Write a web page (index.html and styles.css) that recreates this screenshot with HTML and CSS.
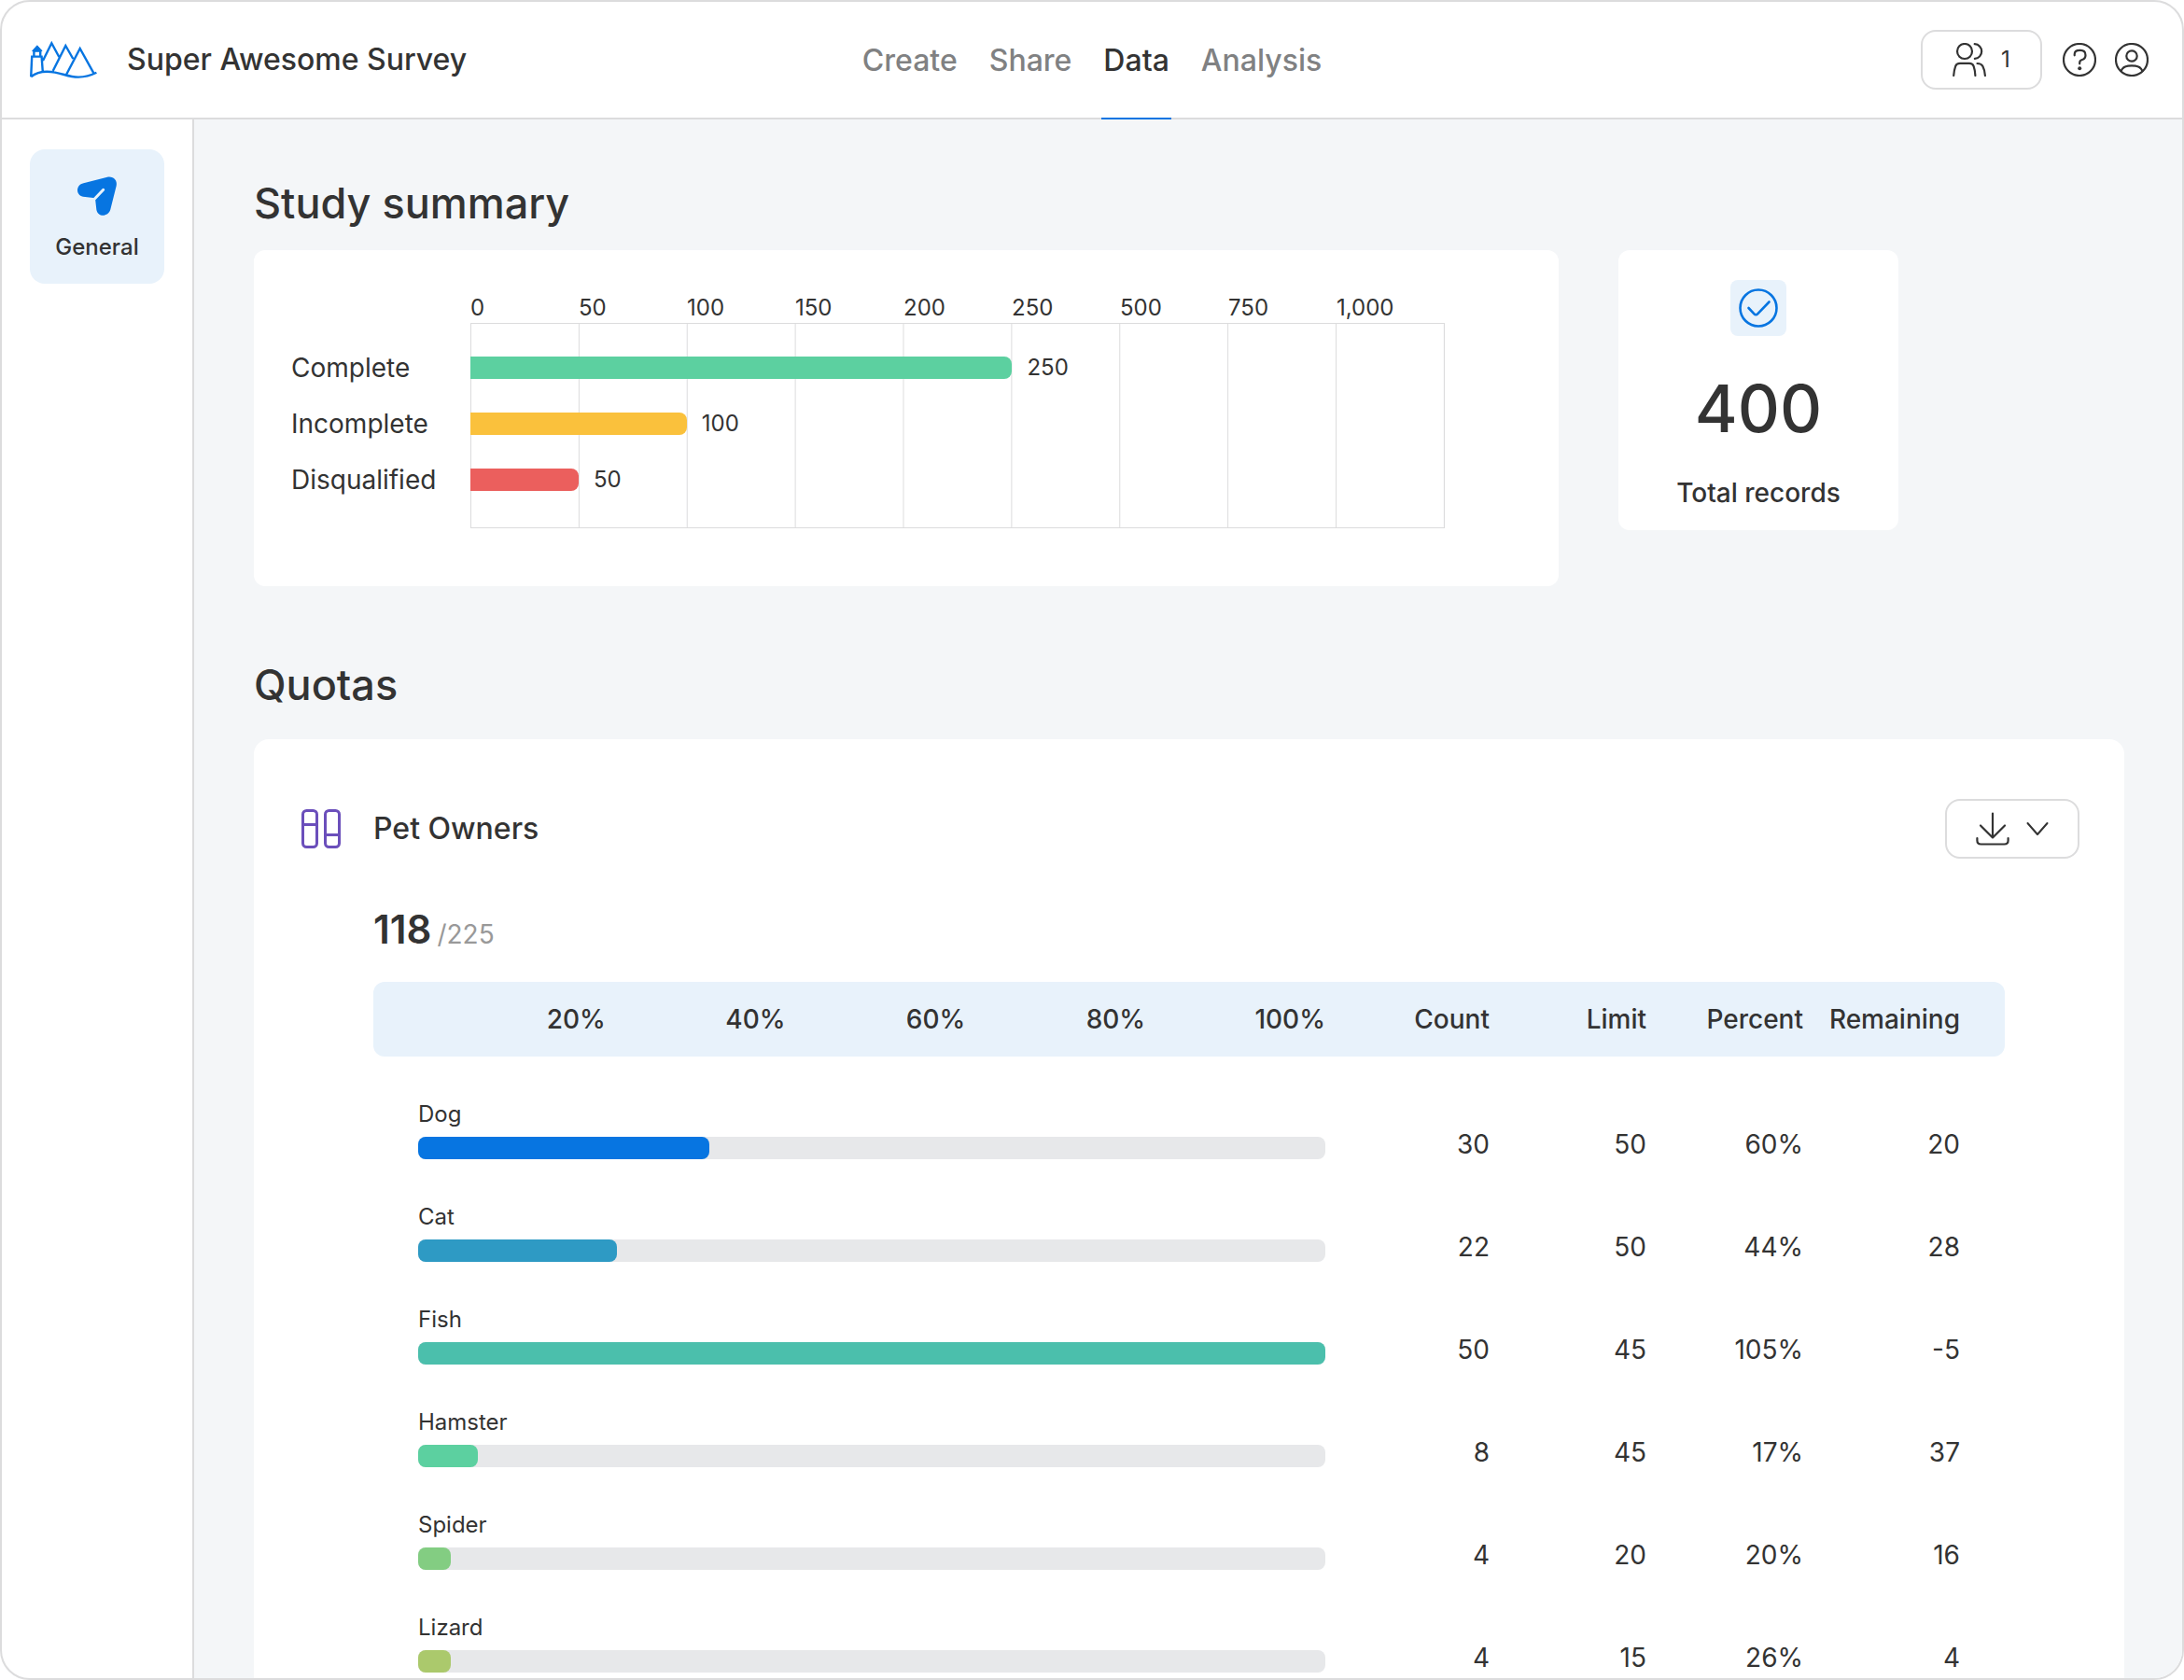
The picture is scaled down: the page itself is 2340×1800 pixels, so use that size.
FILE: index.html
```html
<!DOCTYPE html>
<html lang="en">
<head>
<meta charset="utf-8">
<meta name="viewport" content="width=device-width, initial-scale=1">
<title>Super Awesome Survey – Data</title>
<link rel="stylesheet" href="styles.css">
</head>
<body>
<div class="app">
  <header class="topbar">
    <div class="brand">
      <svg class="logo" viewBox="0 0 72 40" aria-hidden="true">
        <path d="M1.2 38.2 2.2 16.6H12.6L13.8 33M4.4 16V10.6H11.2V16M14 21 23.3 2.3 31.3 17M24.7 32 38.3 5 46.3 19M39 36 53.7 8 68.8 35.2M1.2 38.2C7 33.5 17 31.8 27 33.6C37 35.4 42 38.6 52 38.6C60 38.6 65 37 71.4 33.8"/>
        <path class="logo-roof" d="M7.8 4.8 13 10.6H2.6Z"/>
      </svg>
      <h1 class="title">Super Awesome Survey</h1>
    </div>
    <nav class="tabs" aria-label="Survey sections">
      <a class="tab" href="#create">Create</a>
      <a class="tab" href="#share">Share</a>
      <a class="tab tab-active" href="#data" aria-current="page">Data</a>
      <a class="tab" href="#analysis">Analysis</a>
    </nav>
    <div class="tools">
      <button class="btn btn-users" type="button" aria-label="Collaborators: 1">
        <svg class="icon" viewBox="0 0 36 36" aria-hidden="true"><circle cx="13" cy="9" r="8"/><path d="M23.7 1.2C28.2 1.4 31.2 5 31.2 9S28.2 16.7 23.9 16.9M1.2 35C1.5 31 2.2 27.500 3.2 24.800C4 22.600 5.500 21.800 8 21.800H18C20.300 21.800 21.800 22.600 22.600 24.800C23.600 27.500 24.200 31 24.400 35M26.500 22C29.300 22 31.300 22.900 32.400 25C33.900 27.800 34.600 31 34.900 35"/></svg>
        <span>1</span>
      </button>
      <button class="icon-btn" type="button" aria-label="Help">
        <svg class="icon" viewBox="0 0 36 36" aria-hidden="true"><circle cx="18" cy="18" r="17"/><path d="M12.700 13.300V12.200C12.700 9.500 14.700 7.900 18.300 7.900H19C22.700 7.900 24.500 10 24.500 13.200C24.500 15.800 23.300 17.200 20.800 18C18.900 18.600 18.200 19.500 18.200 21.200V22.300"/><circle class="dot" cx="18.200" cy="27.300" r="2"/></svg>
      </button>
      <button class="icon-btn" type="button" aria-label="Account">
        <svg class="icon" viewBox="0 0 36 36" aria-hidden="true"><circle cx="18" cy="18" r="17"/><circle cx="18" cy="14" r="5.700"/><path d="M6.600 30C8 26.800 10.500 25 14 24.600C16.600 24.300 19.400 24.300 22 24.600C25.500 25 28 26.800 29.400 30"/></svg>
      </button>
    </div>
  </header>

  <div class="body">
    <aside class="sidebar">
      <a class="side-item" href="#general" aria-current="page">
        <svg class="side-icon" viewBox="0 0 42 42" aria-hidden="true"><path d="M6.500 7.200 32 .8C38-.5 43 4 41.700 10L35.300 35.500C33 43.500 22 44 20.400 36L19.200 25.500 17 22.900 6 21.700C-2 20-2 9 6.500 7.200Z"/><path class="slit" d="M17 25.500 27.700 14.300"/></svg>
        <span>General</span>
      </a>
    </aside>

    <main class="content">
      <h2 class="section-title">Study summary</h2>
      <div class="summary">
        <section class="card chart" aria-label="Records by status">
          <div class="axis">
            <span>0</span><span>50</span><span>100</span><span>150</span><span>200</span><span>250</span><span>500</span><span>750</span><span>1,000</span>
          </div>
          <div class="plot">
            <div class="plot-grid"></div>
            <span class="plot-label row-1">Complete</span>
            <div class="plot-bar row-1"><i class="bar bar-complete" style="width:55.6%"></i><span>250</span></div>
            <span class="plot-label row-2">Incomplete</span>
            <div class="plot-bar row-2"><i class="bar bar-incomplete" style="width:22.2%"></i><span>100</span></div>
            <span class="plot-label row-3">Disqualified</span>
            <div class="plot-bar row-3"><i class="bar bar-disqualified" style="width:11.1%"></i><span>50</span></div>
          </div>
        </section>
        <section class="card total">
          <div class="badge">
            <svg class="badge-icon" viewBox="0 0 42 42" aria-hidden="true"><circle cx="21" cy="21" r="19.500"/><path d="M10.500 21 16.500 27.300C17.600 28.500 19 28.500 20.100 27.300L32.500 14.500"/></svg>
          </div>
          <strong class="total-value">400</strong>
          <span class="total-label">Total records</span>
        </section>
      </div>

      <h2 class="section-title quotas-title">Quotas</h2>
      <section class="card quotas">
        <div class="quota-head">
          <svg class="quota-icon" viewBox="0 0 48 48" aria-hidden="true"><rect x="4.500" y="4.500" width="15" height="39" rx="4"/><rect x="28.500" y="4.500" width="15" height="39" rx="4"/><path d="M4.500 19.500H19.500M28.500 30.500H43.500"/></svg>
          <h3 class="quota-name">Pet Owners</h3>
          <button class="btn btn-download" type="button" aria-label="Download options">
            <svg class="icon" viewBox="0 0 36 36" aria-hidden="true"><path d="M18 1.500V27.500M5 14.500 18 27.500 31 14.500M1.400 28V30.500C1.400 33.300 3.200 34.500 5.500 34.500H30.500C32.800 34.500 34.600 33.300 34.600 30.500V28"/></svg>
            <svg class="chevron" viewBox="0 0 24 24" aria-hidden="true"><path d="M1.500 6 12 18 22.500 6"/></svg>
          </button>
        </div>
        <div class="quota-body">
          <p class="quota-total"><strong>118</strong><span>/225</span></p>
          <table class="quota-table">
            <thead>
              <tr>
                <th class="col-bar" scope="col"><div class="ticks"><span>20%</span><span>40%</span><span>60%</span><span>80%</span><span>100%</span></div></th>
                <th class="col-count" scope="col">Count</th>
                <th class="col-num" scope="col">Limit</th>
                <th class="col-num" scope="col">Percent</th>
                <th class="col-last" scope="col">Remaining</th>
              </tr>
            </thead>
            <tbody>
              <tr><th scope="row"><span class="pet">Dog</span><div class="track"><div class="fill dog" style="width:32.1%"></div></div></th><td>30</td><td>50</td><td>60%</td><td>20</td></tr>
              <tr><th scope="row"><span class="pet">Cat</span><div class="track"><div class="fill cat" style="width:21.9%"></div></div></th><td>22</td><td>50</td><td>44%</td><td>28</td></tr>
              <tr><th scope="row"><span class="pet">Fish</span><div class="track"><div class="fill fish" style="width:100%"></div></div></th><td>50</td><td>45</td><td>105%</td><td>-5</td></tr>
              <tr><th scope="row"><span class="pet">Hamster</span><div class="track"><div class="fill hamster" style="width:6.6%"></div></div></th><td>8</td><td>45</td><td>17%</td><td>37</td></tr>
              <tr><th scope="row"><span class="pet">Spider</span><div class="track"><div class="fill spider" style="width:3.6%"></div></div></th><td>4</td><td>20</td><td>20%</td><td>16</td></tr>
              <tr><th scope="row"><span class="pet">Lizard</span><div class="track"><div class="fill lizard" style="width:3.6%"></div></div></th><td>4</td><td>15</td><td>26%</td><td>4</td></tr>
            </tbody>
          </table>
        </div>
      </section>
    </main>
  </div>
</div>
</body>
</html>
```
FILE: styles.css
```css
:root {
  --ink: #333;
  --line: #dcdcdd;
  --blue: #0775e1;
  --tint: #e8f2fb;
  --page: #f4f6f8;
}

* { box-sizing: border-box; }

body {
  margin: 0;
  background: #fff;
  color: var(--ink);
  font: 400 28px/32px Inter, "Liberation Sans", sans-serif;
}

h1, h2, h3, p { margin: 0; font-weight: 500; }
a { color: inherit; text-decoration: none; }
button { font: inherit; color: inherit; background: none; cursor: pointer; }
svg { display: block; flex: none; fill: none; stroke-linecap: round; stroke-linejoin: round; }

.app {
  display: flex;
  flex-direction: column;
  min-height: 100vh;
  border: 2px solid var(--line);
  border-radius: 32px;
  overflow: clip;
}

/* Top bar */
.topbar {
  display: grid;
  grid-template-columns: 1fr auto 1fr;
  align-items: center;
  height: 126px;
  padding: 0 30px;
  border-bottom: 2px solid var(--line);
}
.brand { display: flex; align-items: center; gap: 32px; }
.logo { width: 72px; height: 40px; stroke: var(--blue); stroke-width: 2.4; stroke-linecap: butt; stroke-linejoin: miter; }
.logo-roof { fill: var(--blue); stroke-width: 1; }
.title { font-size: 32px; line-height: 40px; }
.tabs { display: flex; gap: 30px; margin-bottom: -2px; }
.tab {
  height: 126px;
  padding: 0 2px;
  border-bottom: 2px solid transparent;
  color: #808182;
  font-size: 32px;
  font-weight: 500;
  line-height: 126px;
}
.tab-active { border-color: var(--blue); color: var(--ink); }
.tools { display: flex; align-items: center; justify-content: flex-end; gap: 20px; padding-right: 6px; }
.btn {
  display: flex;
  align-items: center;
  justify-content: center;
  height: 64px;
  padding: 0 30px;
  border: 2px solid var(--line);
  border-radius: 16px;
}
.btn-users { gap: 16px; width: 130px; margin-right: 2px; font-size: 24px; }
.btn-download { gap: 18px; width: 144px; }
.icon-btn { padding: 0; border: 0; }
.icon { width: 36px; height: 36px; stroke: var(--ink); stroke-width: 2.2; }
.icon .dot { fill: var(--ink); stroke: none; }
.chevron { width: 24px; height: 24px; stroke: var(--ink); stroke-width: 2; }

/* Sidebar */
.body { display: flex; flex: 1; }
.sidebar { flex: none; width: 206px; padding: 32px 30px; border-right: 2px solid var(--line); }
.side-item {
  display: flex;
  flex-direction: column;
  align-items: center;
  gap: 18px;
  height: 144px;
  padding-top: 29px;
  border-radius: 16px;
  background: var(--tint);
  font-size: 24px;
  font-weight: 500;
}
.side-icon { width: 42px; height: 42px; fill: var(--blue); overflow: visible; }
.slit { stroke: var(--tint); stroke-width: 3; }

/* Content */
.content {
  display: flex;
  flex: 1;
  flex-direction: column;
  min-width: 0;
  padding: 62px 62px 0 64px;
  background: var(--page);
}
.section-title { margin-bottom: 22px; font-size: 45px; line-height: 56px; }
.quotas-title { margin: 78px 0 30px; }
.card { border-radius: 12px; background: #fff; }
.summary { display: grid; grid-template-columns: minmax(0, 1398px) 300px; gap: 64px; align-items: start; }

.chart { padding: 46px 122px 62px 40px; }
.axis {
  display: grid;
  grid-template-columns: repeat(9, 1fr);
  padding-left: 192px;
  font-size: 24px;
}
.plot { display: grid; grid-template-columns: 192px 1fr; grid-template-rows: 18px repeat(3, 60px) 22px; align-items: center; }
.plot-grid {
  grid-column: 2;
  grid-row: 1 / -1;
  align-self: stretch;
  border: solid var(--line);
  border-width: 1px 1px 1px 0;
  background: linear-gradient(to right, var(--line) 1px, transparent 1px) 0 0 / calc(100% / 9) 100%;
}
.plot-label { grid-column: 1; }
.plot-bar { display: flex; grid-column: 2; align-items: center; gap: 16px; font-size: 24px; }
.row-1 { grid-row: 2; }
.row-2 { grid-row: 3; }
.row-3 { grid-row: 4; }
.bar { height: 24px; border-radius: 0 8px 8px 0; }
.bar-complete { background: #5cd0a0; }
.bar-incomplete { background: #fac13c; }
.bar-disqualified { background: #eb5f5d; }

.total { display: flex; flex-direction: column; align-items: center; gap: 32px; padding: 32px 16px 28px; }
.badge { display: grid; place-items: center; width: 60px; height: 60px; border-radius: 8px; background: var(--tint); }
.badge-icon { width: 42px; height: 42px; stroke: var(--blue); stroke-width: 2.6; }
.total-value { font-size: 70px; font-weight: 500; line-height: 92px; }
.total-label { font-weight: 500; line-height: 24px; }

/* Quotas */
.quotas { flex: 1; border-radius: 16px 16px 0 0; }
.quota-head { display: flex; align-items: center; gap: 32px; padding: 64px 48px 0; }
.quota-icon { width: 48px; height: 48px; stroke: #6b4fbb; stroke-width: 3; }
.quota-name { flex: 1; font-size: 32px; line-height: 40px; }
.quota-body { padding: 52px 128px 6px; }
.quota-total { display: flex; align-items: baseline; gap: 6px; height: 48px; margin-bottom: 32px; line-height: 48px; }
.quota-total strong { font-size: 42px; font-weight: 600; }
.quota-total span { color: #999; font-weight: 400; }
.quota-table { width: 100%; border-spacing: 0; table-layout: fixed; }
.quota-table thead th { height: 80px; padding: 0; background: var(--tint); font-weight: 500; text-align: right; }
.quota-table thead th:first-child { padding-left: 56px; border-radius: 12px 0 0 12px; }
.quota-table thead th:last-child { padding-right: 48px; border-radius: 0 12px 12px 0; }
.ticks { display: grid; grid-template-columns: repeat(5, 1fr); }
.col-count { width: 176px; }
.col-num { width: 168px; }
.col-last { width: 216px; }
.quota-table tbody th, .quota-table td { height: 110px; padding: 0; vertical-align: bottom; text-align: right; font-weight: 400; }
.quota-table tbody th { padding-left: 48px; text-align: left; }
.quota-table td:last-child { padding-right: 48px; }
.pet { display: block; margin-bottom: 12px; font-size: 24px; line-height: 24px; }
.track { height: 24px; border-radius: 8px; background: #e7e8ea; }
.fill { height: 100%; border-radius: 8px; }
.dog { background: #0775e1; }
.cat { background: #2e9ac4; }
.fish { background: #4bbfac; }
.hamster { background: #5cd0a0; }
.spider { background: #83cd82; }
.lizard { background: #abc96c; }
```
